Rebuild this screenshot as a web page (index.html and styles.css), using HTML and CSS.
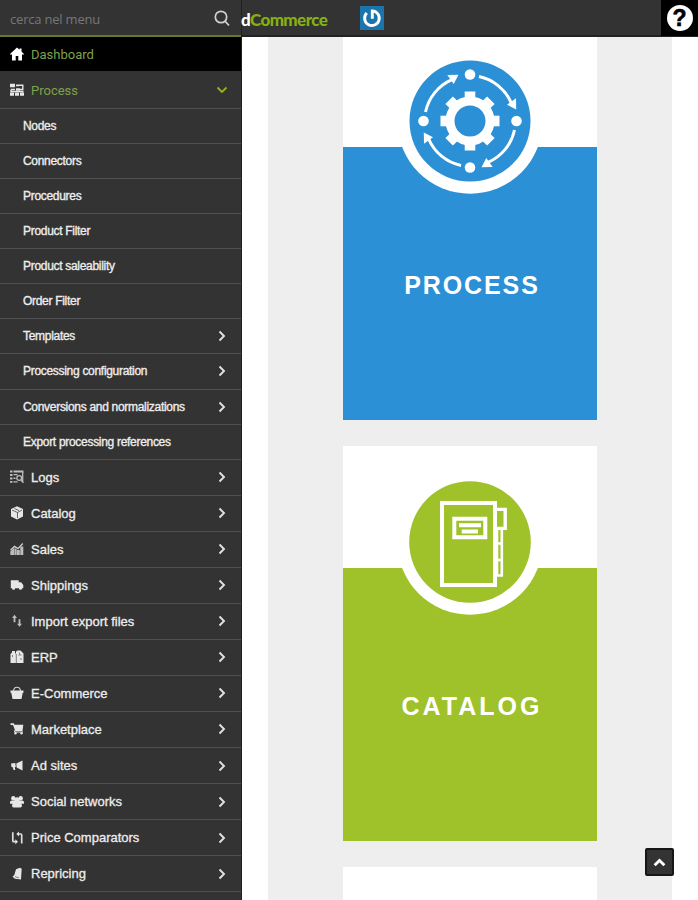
FILE: index.html
```html
<!DOCTYPE html>
<html lang="en">
<head>
<meta charset="utf-8">
<title>Dashboard</title>
<link rel="stylesheet" href="styles.css">
</head>
<body>
<div class="app">
  <nav class="sidebar">
    <div class="search"><span>cerca nel menu</span>
      <svg width="16" height="17" viewBox="0 0 16 17" fill="none" stroke="#d2d2d2" stroke-width="1.700"><circle cx="7" cy="7" r="5.700"/><path d="M11 11.200l4 4.300"/></svg>
    </div>
    <ul class="menu">
      <li class="item dash"><svg class="ic" viewBox="0 0 14 14"><path d="M7 .5L0 7l1 .9 1-.8V13.500h3.700V9h2.600v4.500H12V7.100l1 .8 1-.9-2.500-2.400V1.500h-2v1.300z"/></svg><span>Dashboard</span></li>
      <li class="item open"><svg class="ic" viewBox="0 0 14 14"><path d="M0 .8h5v3.400H0zM6 1.600h3v1.600H6zM0 9.500h4v3.300H0zM5 9.500h4v3.300H5zM10 9.500h4v3.300h-4zM1 5.700h4v1.500H1zM6 5.200h4v2.600H6z"/><path d="M9 2.200h3.800v4.300H10M1 6.500v2h11.800v1" fill="none" stroke="#e6e6e6" stroke-width="1.400"/></svg><span>Process</span><svg class="down" viewBox="0 0 12 8"><path d="M1.500 1.500L6 6l4.500-4.500"/></svg></li>
      <li class="sub"><span>Nodes</span></li>
      <li class="sub"><span>Connectors</span></li>
      <li class="sub"><span>Procedures</span></li>
      <li class="sub"><span>Product Filter</span></li>
      <li class="sub"><span>Product saleability</span></li>
      <li class="sub"><span>Order Filter</span></li>
      <li class="sub"><span>Templates</span><svg class="chev" viewBox="0 0 8 12"><path d="M1.500 1.500L6 6l-4.500 4.500"/></svg></li>
      <li class="sub"><span>Processing configuration</span><svg class="chev" viewBox="0 0 8 12"><path d="M1.500 1.500L6 6l-4.500 4.500"/></svg></li>
      <li class="sub"><span>Conversions and normalizations</span><svg class="chev" viewBox="0 0 8 12"><path d="M1.500 1.500L6 6l-4.500 4.500"/></svg></li>
      <li class="sub"><span>Export processing references</span></li>
      <li class="item"><svg class="ic dim" viewBox="0 0 14 14"><path d="M0 .5h2.500v2H0zM3.500.5h10v2h-10zM0 4h2.500v2H0zM3.500 4h4v1.300h-4zM0 7.500h2.500v2H0zM3.500 7.500h2v1.500h-2zM0 11h2.500v1.700H0zM3.500 11.200h4v1.300h-4z"/><path d="M12.700 2v10M11 10.300l2.500 2.500" fill="none" stroke="#bbb" stroke-width="1.300"/><circle cx="9.200" cy="8" r="2.400" fill="none" stroke="#bbb" stroke-width="1.300"/></svg><span>Logs</span><svg class="chev" viewBox="0 0 8 12"><path d="M1.500 1.500L6 6l-4.500 4.500"/></svg></li>
      <li class="item"><svg class="ic" viewBox="0 0 14 14"><path d="M7 .3l6 2.600v7.500L7 13.600 1 10.400V2.900z"/><path d="M2 4l5.500 2.500L12 4M7.500 6.500V12M4.500 2.500L9 4.600" fill="none" stroke="#444" stroke-width=".8"/></svg><span>Catalog</span><svg class="chev" viewBox="0 0 8 12"><path d="M1.500 1.500L6 6l-4.500 4.500"/></svg></li>
      <li class="item"><svg class="ic dim" viewBox="0 0 14 14"><path d="M.3 9.500L4.300 6v7h-4zM4.700 6l2 1.500V13h-2zM7 8h2.800v5H7zM10.300 4.500H13.300V13h-3z"/><path d="M.5 8.200l4-3.700L8 6.700l4.800-5.200" fill="none" stroke="#ccc" stroke-width="1.400"/></svg><span>Sales</span><svg class="chev" viewBox="0 0 8 12"><path d="M1.500 1.500L6 6l-4.500 4.500"/></svg></li>
      <li class="item"><svg class="ic" viewBox="0 0 14 14"><path d="M.8 2.300h7.900v2h2.400L13.300 7v3.200h-1.200a1.600 1.600 0 0 1-3.200 0H5.200a1.600 1.600 0 0 1-3.200 0H.8z"/></svg><span>Shippings</span><svg class="chev" viewBox="0 0 8 12"><path d="M1.500 1.500L6 6l-4.500 4.500"/></svg></li>
      <li class="item"><svg class="ic dim" viewBox="0 0 14 14"><path d="M4.500.8L7 3.900H5.400v4.300H3.600V3.900H2zM9.500 12.800L7 9.700h1.600V5.200h1.800v4.500H12z"/></svg><span>Import export files</span><svg class="chev" viewBox="0 0 8 12"><path d="M1.500 1.500L6 6l-4.500 4.500"/></svg></li>
      <li class="item"><svg class="ic" viewBox="0 0 14 14"><path d="M.5 4L2 2.500V1h3v1.500L6 4V1.500L7.500.5h3l3 3V13H.5z"/><path d="M6.300 4v9M8.500 5h3M9.500 2.500v2M11 8v2M2.500 5v2" stroke="#555" stroke-width=".7"/></svg><span>ERP</span><svg class="chev" viewBox="0 0 8 12"><path d="M1.500 1.500L6 6l-4.500 4.500"/></svg></li>
      <li class="item"><svg class="ic" viewBox="0 0 14 14"><path d="M.5 4.500h13v2.300h-.8l-1.200 6.200h-9L1.300 6.800H.5z"/><path d="M3.500 5C4 0 10 0 10.500 5" fill="none" stroke="#d6d6d6" stroke-width="1.200"/></svg><span>E-Commerce</span><svg class="chev" viewBox="0 0 8 12"><path d="M1.500 1.500L6 6l-4.500 4.500"/></svg></li>
      <li class="item"><svg class="ic" viewBox="0 0 14 14"><path d="M.5 1.200h3.300l.7 1.500h8.800L12.500 9H5.300L3 3H.5z"/><path d="M5 8l-.5 2H13" fill="none" stroke="#e6e6e6"/><circle cx="5.500" cy="11.300" r="1.200"/><circle cx="11.500" cy="11.300" r="1.200"/></svg><span>Marketplace</span><svg class="chev" viewBox="0 0 8 12"><path d="M1.500 1.500L6 6l-4.500 4.500"/></svg></li>
      <li class="item"><svg class="ic" viewBox="0 0 14 14"><path d="M1 4.500l4.300-.5.500 4-1 .3.500 2.700H3.500L2.800 8.300 1.500 8zM6.300 4.500L12.500 1.500v10L6.600 8.500z"/></svg><span>Ad sites</span><svg class="chev" viewBox="0 0 8 12"><path d="M1.500 1.500L6 6l-4.500 4.500"/></svg></li>
      <li class="item"><svg class="ic" viewBox="0 0 14 14"><circle cx="3.300" cy="3.200" r="2.200"/><circle cx="10.700" cy="3.200" r="2.200"/><circle cx="7" cy="5" r="2.700"/><path d="M0 8.700V7q0-1.500 2-1.500h10q2 0 2 1.500v1.700h-2.500l.5 2q0 1.800-1.700 1.800H3.700Q2 12.500 2 10.700l.5-2z"/></svg><span>Social networks</span><svg class="chev" viewBox="0 0 8 12"><path d="M1.500 1.500L6 6l-4.500 4.500"/></svg></li>
      <li class="item"><svg class="ic" viewBox="0 0 14 14"><path d="M2.800 1.200V9.700q0 1 1 1h2M11.700 12.500V4q0-1-1-1H8.500" fill="none" stroke="#ddd" stroke-width="1.700"/><path d="M5.300 8.200L8 10.700l-2.700 2.500zM9 .5L6.300 3 9 5.500z"/></svg><span>Price Comparators</span><svg class="chev" viewBox="0 0 8 12"><path d="M1.500 1.500L6 6l-4.500 4.500"/></svg></li>
      <li class="item"><svg class="ic" viewBox="0 0 14 14"><path d="M6 2.300L10 .8l1.700 1L11 12.500 5 11.800 2.500 9.700 4.300 8z"/><path d="M5 9.500l4 1.500" stroke="#666" stroke-width=".8"/></svg><span>Repricing</span><svg class="chev" viewBox="0 0 8 12"><path d="M1.500 1.500L6 6l-4.500 4.500"/></svg></li>
    </ul>
  </nav>
  <div class="page">
    <header class="topbar">
      <div class="logo"><span>d</span>Commerce</div>
      <svg class="gravatar" viewBox="0 0 24 24"><path fill="#1c74ac" d="M0 0h24v24H0z"/><path d="M12.300 12.800V4.900A7.300 7.300 0 1 1 6.800 7" fill="none" stroke="#fff" stroke-width="2.900"/></svg>
      <div class="help"><span>?</span></div>
    </header>
    <main class="content">
      <div class="panel">
        <section class="card blue">
          <svg class="art" viewBox="0 0 254 180">
            <circle cx="127" cy="96" r="72.700" fill="#fff"/><circle cx="127" cy="96" r="60.500" fill="#2b90d5"/>
            <g transform="translate(127 96)">
              <g fill="#fff"><path id="t" d="M-5.300-29.500H5.300V-20H-5.300z"/><use href="#t" transform="rotate(45)"/><use href="#t" transform="rotate(90)"/><use href="#t" transform="rotate(135)"/><use href="#t" transform="rotate(180)"/><use href="#t" transform="rotate(225)"/><use href="#t" transform="rotate(270)"/><use href="#t" transform="rotate(315)"/></g>
              <circle r="20" fill="none" stroke="#fff" stroke-width="9"/>
              <g id="q"><circle cy="-46.500" r="5.300" fill="#fff"/><path d="M-44.500-9A45.400 45.400 0 0 1-18-41.300" fill="none" stroke="#fff" stroke-width="3"/><path d="M-11.500-46.200l-11.200.2 6.400 9z" fill="#fff"/></g>
              <use href="#q" transform="rotate(90)"/><use href="#q" transform="rotate(180)"/><use href="#q" transform="rotate(270)"/>
            </g>
          </svg>
          <h2>PROCESS</h2>
        </section>
        <section class="card green">
          <svg class="art" viewBox="0 0 254 180">
            <circle cx="127" cy="96" r="72.700" fill="#fff"/><circle cx="127" cy="96" r="60.800" fill="#9fc22a"/>
            <g fill="none" stroke="#fff">
              <path stroke-width="4" d="M99 57h53v82H99zM111.300 72.700h31v18.600h-31z"/>
              <path stroke-width="4" d="M116 79.300h22M118.700 85.500h16.300"/>
              <path stroke-width="3.400" d="M153 63.400h9.200v19H153"/>
              <path stroke-width="2.600" d="M158.800 83v46.500h-6M153 97.500h6M153 114h6"/>
              <path stroke-width="1.600" d="M154.500 84v46"/>
            </g>
          </svg>
          <h2>CATALOG</h2>
        </section>
        <section class="card"></section>
      </div>
    </main>
  </div>
  <button class="totop"><svg width="13" height="9" viewBox="0 0 12 8"><path d="M1.500 6.500L6 2.200l4.500 4.300" fill="none" stroke="#fff" stroke-width="2.700"/></svg></button>
</div>
</body>
</html>
```
FILE: styles.css
```css
* { box-sizing: border-box; }
body { margin: 0; background: #fff; font-family: "Liberation Sans", Arial, sans-serif; }
.app { display: flex; width: 698px; height: 900px; overflow: hidden; position: relative; }

.sidebar { width: 242px; flex: none; background: #333; border-right: 1px solid #202020; overflow: hidden; }
.search { height: 37px; border-bottom: 2px solid #69772b; display: flex; align-items: center; justify-content: space-between; padding: 2px 11px 0 10px; color: #777; font: 13px "Open Sans", sans-serif; letter-spacing: -0.2px; }
.menu { list-style: none; margin: 0; padding: 0; }
.item, .sub { display: flex; align-items: center; border-bottom: 1px solid #505050; color: #ededed; white-space: nowrap; }
.item { height: 36.050px; padding: 0 15px 0 10px; font-size: 13px; -webkit-text-stroke: 0.3px currentColor; }
.sub { height: 35.070px; padding: 0 15px 0 23px; font-size: 12px; letter-spacing: -0.3px; -webkit-text-stroke: 0.35px currentColor; }
.item span, .sub span { flex: 1; }
.dash { height: 35px; background: #000; color: #7fa04c; font-family: Roboto, sans-serif; -webkit-text-stroke: 0; border-bottom-color: #333; }
.open { height: 37px; color: #7fa04c; font-family: Roboto, sans-serif; -webkit-text-stroke: 0; }
.ic { width: 14px; height: 14px; margin-right: 7px; fill: #e6e6e6; flex: none; }
.dash .ic { fill: #fff; }
.dim { fill: #bdbdbd; }
.chev { width: 8px; height: 12px; fill: none; stroke: #e2e2e2; stroke-width: 1.9; }
.down { width: 12px; height: 8px; margin-right: -2px; fill: none; stroke: #93b51c; stroke-width: 1.8; }

.page { flex: 1; min-width: 0; display: flex; flex-direction: column; }
.topbar { height: 37px; flex: none; background: #333; border-bottom: 2px solid #222; display: flex; align-items: center; }
.logo { width: 119px; color: #86b010; font: 900 17px Lato, sans-serif; letter-spacing: -0.6px; margin-left: -1px; padding-top: 3px; }
.logo span { color: #fff; }
.gravatar { width: 24px; height: 24px; }
.help { margin-left: auto; width: 37px; height: 36px; background: #000; display: flex; align-items: center; justify-content: center; align-self: flex-start; }
.help span { width: 26px; height: 26px; border-radius: 50%; background: #fff; color: #000; font: bold 23px/27px "Liberation Sans", sans-serif; -webkit-text-stroke: 0.6px #000; text-align: center; }

.content { flex: 1; overflow: hidden; padding: 0 26px; }
.panel { background: #eee; display: flex; flex-direction: column; align-items: center; gap: 26px; }
.card { width: 254px; height: 395px; flex: none; background: #fff; }
.card:first-child { margin-top: -12px; }
.art { display: block; width: 254px; height: 180px; }
.card h2 { margin: 65px 0 0; padding-left: 4px; text-align: center; color: #fff; font: bold 25px/30px "Liberation Sans", sans-serif; letter-spacing: 3px; }
.blue { background: linear-gradient(#fff 122px, #2b90d5 122px); }
.blue h2 { letter-spacing: 1.9px; }
.green { background: linear-gradient(#fff 122px, #9fc22a 122px); }

.totop { position: absolute; left: 645px; top: 848px; width: 29px; height: 28px; padding: 0; background: #333; border: 2px solid #161616; border-radius: 2px; display: flex; align-items: center; justify-content: center; }
```
